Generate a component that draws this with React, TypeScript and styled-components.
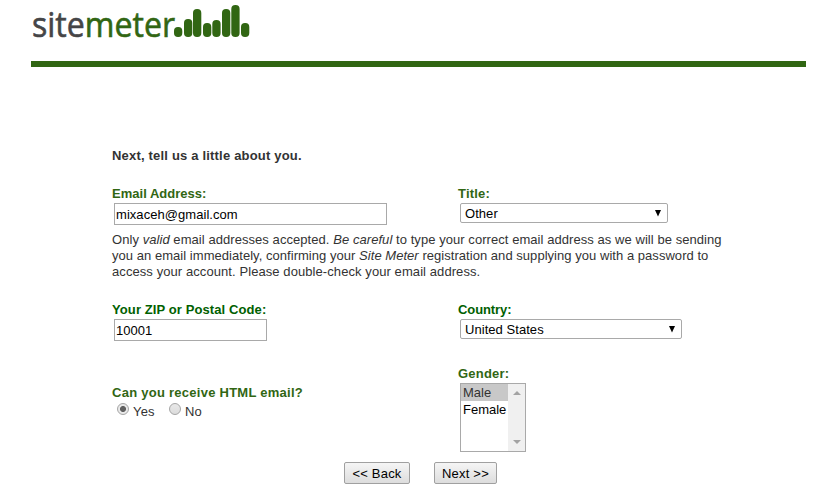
import React from "react";
import styled, { createGlobalStyle } from "styled-components";

const GlobalStyle = createGlobalStyle`
  * { box-sizing: border-box; }
  body {
    margin: 0;
    background: #fff;
    color: #333;
    font: 13px/16px "Liberation Sans", Arial, sans-serif;
    overflow: hidden;
  }
`;

const Page = styled.div`
  width: 838px;
  height: 496px;
  padding: 0 32px 0 31px;
`;
const Header = styled.header`
  height: 67px;
  border-bottom: 6px solid #316613;
`;
const LogoMark = styled.svg`
  display: block;
  overflow: visible;
`;
const Form = styled.form`
  width: 640px;
  margin-left: 81px;
  padding-top: 81px;
`;
const Heading = styled.h1`
  margin: 0 0 22px;
  font-size: 13px;
  line-height: 16px;
  letter-spacing: 0.19px;
`;
const Columns = styled.div<{ $height: number }>`
  display: grid;
  grid-template-columns: 346px 1fr;
  height: ${(p) => p.$height}px;
`;
const Field = styled.div<{ $top?: number }>`
  padding-top: ${(p) => p.$top ?? 0}px;
`;
const Label = styled.label<{ $tone?: string; $spacing?: number }>`
  display: block;
  height: 16px;
  font-weight: bold;
  white-space: nowrap;
  color: ${(p) => p.$tone ?? "#316613"};
  letter-spacing: ${(p) => p.$spacing ?? 0.2}px;
`;
const TextInput = styled.input<{ $width: number }>`
  display: block;
  width: ${(p) => p.$width}px;
  height: 22px;
  margin: 1px 0 0 2px;
  padding: 1px 1px 0;
  border: 1px solid #a9a9a9;
  border-radius: 0;
  outline: none;
  color: #000;
  background: #fff;
  font: 13px "Liberation Sans", Arial, sans-serif;
  letter-spacing: 0.05px;
`;
const SelectBox = styled.div<{ $width: number }>`
  display: flex;
  align-items: center;
  justify-content: space-between;
  width: ${(p) => p.$width}px;
  height: 20px;
  margin: 1px 0 0 2px;
  padding: 1px 5px 0 4px;
  border: 1px solid #a9a9a9;
  border-radius: 2px;
  color: #000;
  letter-spacing: 0.05px;
`;
const Note = styled.p`
  margin: 0;
  height: 70px;
  white-space: nowrap;
`;
const NoteLine = styled.span<{ $spacing: number }>`
  display: block;
  letter-spacing: ${(p) => p.$spacing}px;
`;
const RadioRow = styled.div`
  display: flex;
  padding: 1px 0 0 5px;
  height: 20px;
`;
const RadioOption = styled.label<{ $width: number }>`
  display: flex;
  gap: 4px;
  width: ${(p) => p.$width}px;
  line-height: 20px;
  letter-spacing: 0.2px;
`;
const Dot = styled.span<{ $checked?: boolean }>`
  width: 12px;
  height: 12px;
  margin-top: 1px;
  border: 1px solid #a5a5a5;
  border-radius: 50%;
  background: ${(p) =>
    p.$checked
      ? "radial-gradient(circle, #606060 0 2.6px, #e9e9e9 3.4px)"
      : "linear-gradient(#e8e8e8, #dcdcdc)"};
`;
const ListBox = styled.div`
  display: flex;
  width: 66px;
  height: 69px;
  margin: 1px 0 0 2px;
  border: 1px solid #a9a9a9;
  color: #000;
`;
const Options = styled.div`
  flex: 1;
`;
const Option = styled.div<{ $selected?: boolean }>`
  height: 17px;
  padding-left: 2px;
  line-height: 17px;
  color: ${(p) => (p.$selected ? "#333" : "#000")};
  background: ${(p) => (p.$selected ? "#c8c8c8" : "transparent")};
`;
const Scrollbar = styled.div`
  display: flex;
  flex-direction: column;
  align-items: center;
  justify-content: space-between;
  width: 17px;
  padding: 7px 0;
  background: #f0f0f0;
`;
const Actions = styled.div`
  display: flex;
  gap: 24px;
  margin-left: 232px;
`;
const Button = styled.button<{ $width: number }>`
  width: ${(p) => p.$width}px;
  height: 22px;
  padding: 1px 0 0;
  border: 1px solid #a0a0a0;
  border-radius: 2px;
  color: #000;
  background: linear-gradient(#f5f5f5, #dddddd);
  font: 13px "Liberation Sans", Arial, sans-serif;
  letter-spacing: 0.2px;
  white-space: nowrap;
`;

const bars = [
  [174, 27], [184, 19], [193, 9], [203, 23],
  [212.3, 20], [222, 9], [231.3, 5], [241, 23],
];

const Logo = () => (
  <LogoMark width="250" height="61" viewBox="31 0 250 61" role="img" aria-label="sitemeter">
    <text
      x="32"
      y="36.5"
      textLength="143"
      lengthAdjust="spacingAndGlyphs"
      fontFamily='"Open Sans", "Noto Sans", sans-serif'
      fontSize="35"
      strokeWidth="0.6"
    >
      <tspan fill="#454547" stroke="#454547">site</tspan>
      <tspan fill="#316613" stroke="#316613">meter</tspan>
    </text>
    {bars.map(([x, top]) => (
      <rect key={x} x={x} y={top} width="8.3" height={37 - top} rx="4" fill="#316613" />
    ))}
  </LogoMark>
);

const DownArrow = () => (
  <svg width="8" height="7" viewBox="0 0 8 7"><path d="M1 0h6L4 6.5z" fill="#000" /></svg>
);
const ScrollArrow = ({ down }: { down?: boolean }) => (
  <svg width="8" height="4" viewBox="0 0 8 4">
    <path d={down ? "M0 0h8L4 4z" : "M0 4h8L4 0z"} fill="#a3a3a3" />
  </svg>
);

export default function App() {
  return (
    <>
      <GlobalStyle />
      <Page>
        <Header><Logo /></Header>
        <Form onSubmit={(e) => e.preventDefault()}>
          <Heading>Next, tell us a little about you.</Heading>
          <Columns $height={46}>
            <Field>
              <Label htmlFor="email" $spacing={0.02}>Email Address:</Label>
              <TextInput id="email" $width={273} defaultValue="mixaceh@gmail.com" />
            </Field>
            <Field>
              <Label>Title:</Label>
              <SelectBox $width={208}>Other<DownArrow /></SelectBox>
            </Field>
          </Columns>
          <Note>
            <NoteLine $spacing={0.06}>Only <i>valid</i> email addresses accepted. <i>Be careful</i> to type your correct email address as we will be sending</NoteLine>
            <NoteLine $spacing={0.04}>you an email immediately, confirming your <i>Site Meter</i> registration and supplying you with a password to</NoteLine>
            <NoteLine $spacing={0.08}>access your account. Please double-check your email address.</NoteLine>
          </Note>
          <Columns $height={64}>
            <Field>
              <Label htmlFor="zip" $tone="#006000" $spacing={0.1}>Your ZIP or Postal Code:</Label>
              <TextInput id="zip" $width={153} defaultValue="10001" />
            </Field>
            <Field>
              <Label $tone="#006000" $spacing={-0.1}>Country:</Label>
              <SelectBox $width={222}>United States<DownArrow /></SelectBox>
            </Field>
          </Columns>
          <Columns $height={96}>
            <Field $top={19}>
              <Label $spacing={0.26}>Can you receive HTML email?</Label>
              <RadioRow>
                <RadioOption $width={52}><Dot $checked />Yes</RadioOption>
                <RadioOption $width={50}><Dot />No</RadioOption>
              </RadioRow>
            </Field>
            <Field>
              <Label>Gender:</Label>
              <ListBox>
                <Options>
                  <Option $selected>Male</Option>
                  <Option>Female</Option>
                </Options>
                <Scrollbar><ScrollArrow /><ScrollArrow down /></Scrollbar>
              </ListBox>
            </Field>
          </Columns>
          <Actions>
            <Button type="button" $width={66}>&lt;&lt; Back</Button>
            <Button type="submit" $width={63}>Next &gt;&gt;</Button>
          </Actions>
        </Form>
      </Page>
    </>
  );
}
